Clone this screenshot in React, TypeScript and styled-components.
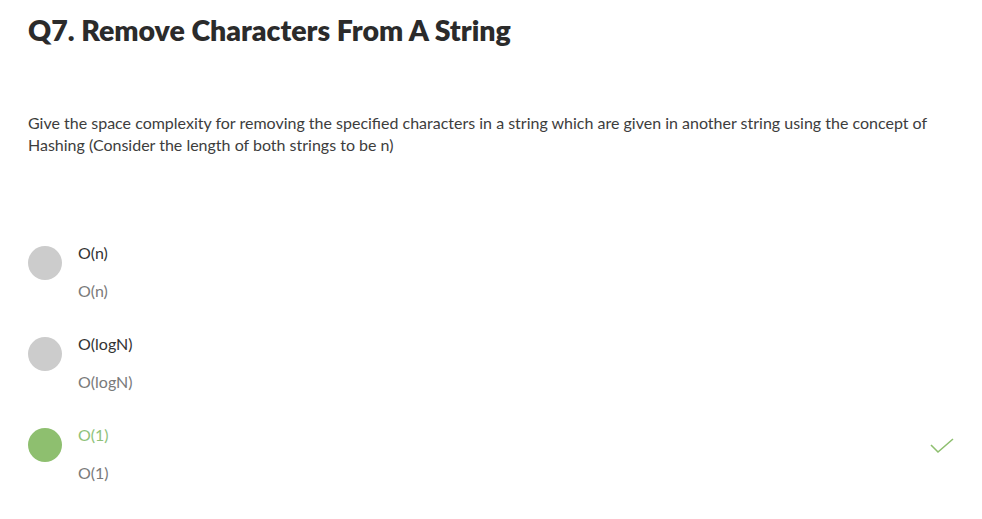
import styled, { createGlobalStyle } from 'styled-components';

const GlobalStyle = createGlobalStyle`
  body {
    margin: 0;
    background: #fff;
    font-family: 'Lato', 'Noto Sans', sans-serif;
  }
`;

const Page = styled.div`
  padding: 12px 27px 0 28px;
`;

const Title = styled.h1`
  margin: 0;
  font-size: 28.5px;
  line-height: 36px;
  font-weight: 800;
  color: #2b2b2b;
`;

const Question = styled.p`
  margin: 64px 0 0;
  font-size: 16px;
  line-height: 22px;
  color: #3d3d3d;
`;

const Options = styled.div`
  display: flex;
  flex-direction: column;
  gap: 33px;
  margin-top: 87px;
`;

const Row = styled.div`
  display: flex;
  align-items: flex-start;
`;

const Dot = styled.div<{ $correct?: boolean }>`
  width: 34px;
  height: 34px;
  border-radius: 50%;
  margin-top: 3px;
  background: ${(p) => (p.$correct ? '#8ebf6f' : '#cccccc')};
`;

const Labels = styled.div`
  display: flex;
  flex-direction: column;
  gap: 18px;
  margin-left: 16px;
`;

const Choice = styled.span<{ $correct?: boolean }>`
  font-size: 16px;
  line-height: 20px;
  color: ${(p) => (p.$correct ? '#8ec27a' : '#333333')};
`;

const Answer = styled.span`
  font-size: 16px;
  line-height: 20px;
  color: #7a7a7a;
`;

const Check = styled.svg`
  margin: 12px 0 0 auto;
  width: 26px;
  height: 18px;
`;

const options = [
  { label: 'O(n)', correct: false },
  { label: 'O(logN)', correct: false },
  { label: 'O(1)', correct: true },
];

export default function App() {
  return (
    <>
      <GlobalStyle />
      <Page>
        <Title>Q7. Remove Characters From A String</Title>
        <Question>
          Give the space complexity for removing the specified characters in a string which are given in another
          string using the concept of Hashing (Consider the length of both strings to be n)
        </Question>
        <Options>
          {options.map((o) => (
            <Row key={o.label}>
              <Dot $correct={o.correct} />
              <Labels>
                <Choice $correct={o.correct}>{o.label}</Choice>
                <Answer>{o.label}</Answer>
              </Labels>
              {o.correct && (
                <Check viewBox="0 0 26 18">
                  <polyline points="2,8 9,15 24,2" fill="none" stroke="#8ebf6f" strokeWidth="1.6" />
                </Check>
              )}
            </Row>
          ))}
        </Options>
      </Page>
    </>
  );
}
